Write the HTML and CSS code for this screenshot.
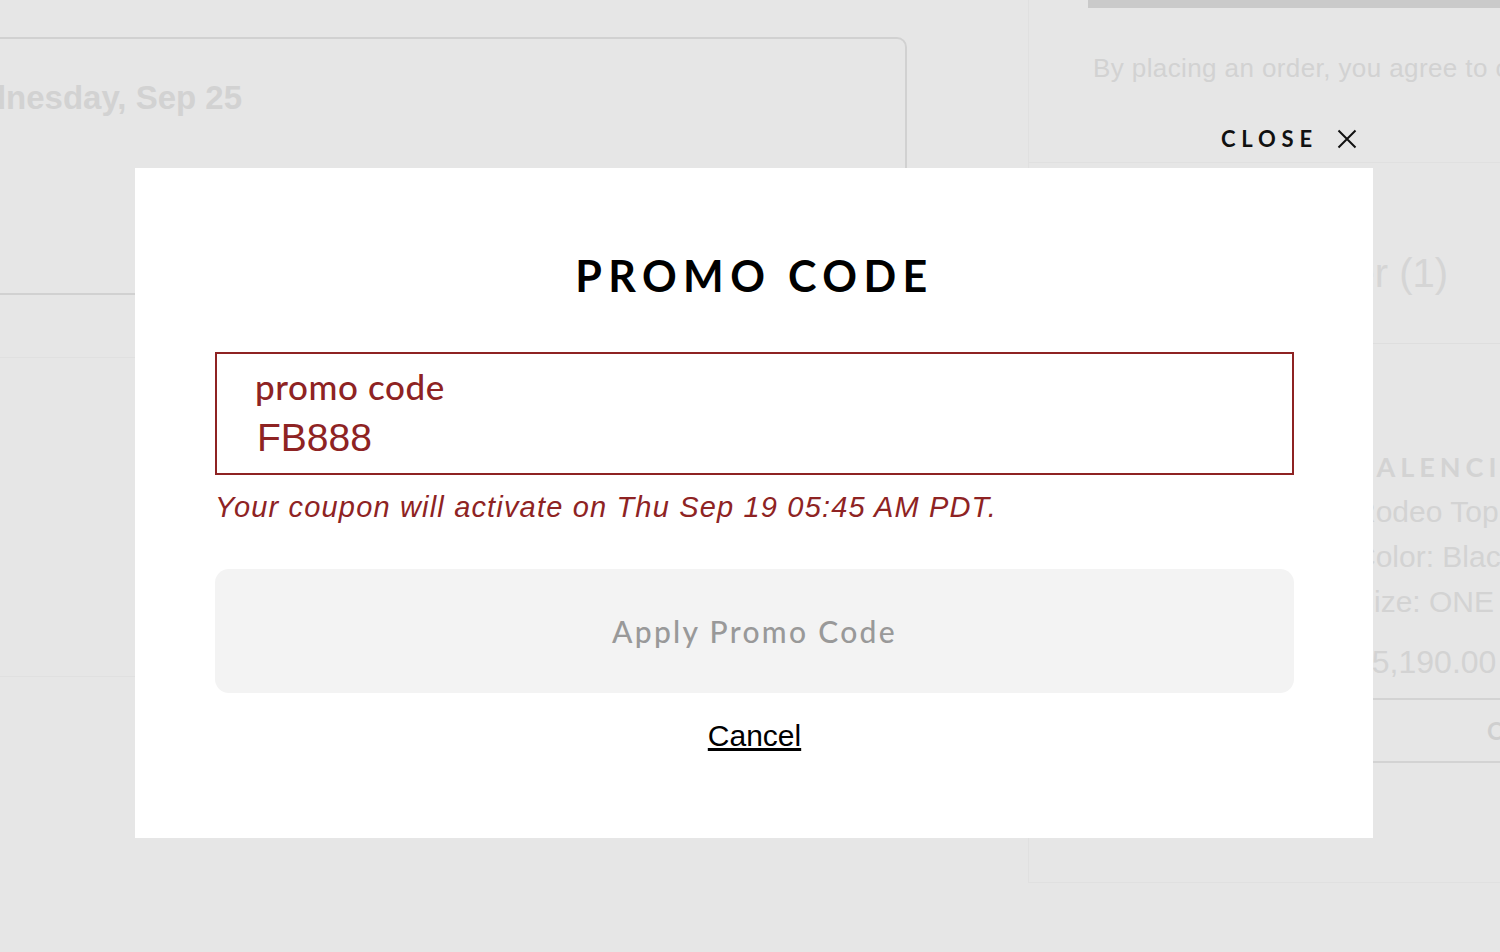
FILE: index.html
```html
<!DOCTYPE html>
<html lang="en">
<head>
    <meta charset="UTF-8">
    <meta name="viewport" content="width=device-width, initial-scale=1.0">
    <title>Checkout - Promo Code</title>
    <link rel="stylesheet" href="styles.css">
</head>
<body>
    <div class="page">
        <div class="main">
            <div class="card">
                <h2 class="delivery-date">Wednesday, Sep 25</h2>
            </div>
            <div class="card-faint"></div>
        </div>

        <div class="side">
            <div class="side-box">
                <div class="place-order"></div>
                <p class="terms">By placing an order, you agree to our Terms</p>
            </div>
            <div class="side-box summary">
                <h3 class="summary-title">Your Order (1)</h3>
                <div class="item">
                    <div class="item-thumb"></div>
                    <div class="item-info">
                        <div class="item-brand">BALENCIAGA</div>
                        <div class="item-line">Rodeo Top</div>
                        <div class="item-line">Color: Black</div>
                        <div class="item-line">Size: ONE SIZE</div>
                        <div class="item-price">$5,190.00</div>
                    </div>
                </div>
                <div class="side-btn">CHANGE</div>
            </div>
        </div>
    </div>

    <button class="close-btn">
        <span>CLOSE</span>
        <svg width="20" height="20" viewBox="0 0 20 20">
            <path d="M1.5 1.5 L18.5 18.5 M18.5 1.5 L1.5 18.5" stroke="#111" stroke-width="2" fill="none"/>
        </svg>
    </button>

    <div class="modal">
        <h1 class="modal-title">PROMO CODE</h1>
        <div class="field">
            <label for="promo">promo code</label>
            <input type="text" id="promo" value="FB888">
        </div>
        <p class="field-error">Your coupon will activate on Thu Sep 19 05:45 AM PDT.</p>
        <button class="apply-btn">Apply Promo Code</button>
        <div class="cancel-row">
            <a href="#" class="cancel-link">Cancel</a>
        </div>
    </div>
</body>
</html>
```

FILE: styles.css
```css
body {
    margin: 0;
    width: 1500px;
    height: 952px;
    overflow: hidden;
    background-color: #e6e6e6;
    font-family: 'Liberation Sans', Arial, sans-serif;
    position: relative;
}

.page {
    display: flex;
}

/* background page, greyed out behind the modal */
.main {
    width: 1028px;
    flex: none;
}

.card {
    box-sizing: border-box;
    width: 1027px;
    height: 258px;
    margin: 37px 0 0 -120px;
    padding: 39px 0 0 55px;
    border: 2px solid #d1d1d1;
    border-radius: 10px;
}

.delivery-date {
    margin: 0;
    font-size: 33px;
    line-height: 40px;
    font-weight: bold;
    color: #d2d2d2;
    white-space: nowrap;
}

.card-faint {
    height: 318px;
    margin-top: 62px;
    border-top: 1px solid #e0e0e0;
    border-bottom: 1px solid #e0e0e0;
}

.side {
    width: 600px;
    flex: none;
}

.side-box {
    box-sizing: border-box;
    border-left: 1px solid #e0e0e0;
    border-bottom: 1px solid #e0e0e0;
    height: 163px;
    padding-left: 59px;
}

.place-order {
    width: 460px;
    height: 8px;
    background-color: #cacaca;
}

.terms {
    margin: 45px 0 0 5px;
    font-size: 26px;
    line-height: 30px;
    letter-spacing: 0.4px;
    color: #d2d2d2;
    white-space: nowrap;
}

.summary {
    height: 720px;
    padding-left: 0;
}

.summary-title {
    margin: 0;
    padding: 86px 0 46px 165px;
    font-size: 40px;
    line-height: 48px;
    font-weight: normal;
    color: #d5d5d5;
    border-bottom: 1px solid #dedede;
    white-space: nowrap;
}

.item {
    display: flex;
    gap: 35px;
    padding: 0 0 0 60px;
}

.item-thumb {
    width: 230px;
    height: 300px;
    margin-top: 40px;
    background-color: #dcdcdc;
}

.item-info {
    padding-top: 106px;
    color: #d3d3d3;
    white-space: nowrap;
}

.item-brand {
    font-family: Lato, sans-serif;
    font-weight: 700;
    font-size: 27px;
    line-height: 34px;
    letter-spacing: 5px;
    margin-bottom: 5px;
}

.item-line {
    font-size: 30px;
    line-height: 45px;
}

.item-price {
    font-size: 32px;
    line-height: 44px;
    margin: 16px 0 14px;
}

.side-btn {
    box-sizing: border-box;
    height: 65px;
    margin-left: 80px;
    padding-left: 378px;
    border-top: 2px solid #d3d3d3;
    border-bottom: 2px solid #d3d3d3;
    font-family: Lato, sans-serif;
    font-weight: 700;
    font-size: 24px;
    line-height: 61px;
    letter-spacing: 3px;
    color: #cfcfcf;
}

/* overlay */
.close-btn {
    position: absolute;
    left: 1221px;
    top: 127px;
    display: flex;
    align-items: center;
    gap: 19px;
    padding: 0;
    border: none;
    background: none;
    cursor: pointer;
    font-family: Lato, sans-serif;
    font-weight: 700;
    font-size: 22px;
    line-height: 24px;
    letter-spacing: 5.8px;
    color: #111;
}

.close-btn svg {
    display: block;
}

.modal {
    position: absolute;
    left: 135px;
    top: 168px;
    box-sizing: border-box;
    width: 1238px;
    height: 670px;
    padding: 83px 79px 0 80px;
    background-color: white;
}

.modal-title {
    margin: 0;
    text-align: center;
    font-family: Lato, sans-serif;
    font-weight: 700;
    font-size: 43px;
    line-height: 50px;
    letter-spacing: 6.4px;
    color: #000;
}

.field {
    margin-top: 51px;
    border: 2px solid #8e2323;
    padding: 12px 38px 12px;
}

.field label {
    display: block;
    font-family: Lato, sans-serif;
    font-weight: 500;
    font-size: 35px;
    line-height: 40px;
    letter-spacing: 0.6px;
    color: #8e2323;
}

.field input {
    display: block;
    width: 100%;
    margin-top: 9px;
    padding: 0 0 0 2px;
    border: none;
    outline: none;
    font-family: 'Liberation Sans', Arial, sans-serif;
    font-size: 39px;
    line-height: 46px;
    height: 46px;
    color: #8e2323;
}

.field-error {
    margin: 14px 0 0 0;
    font-style: italic;
    font-size: 29px;
    line-height: 36px;
    letter-spacing: 1.17px;
    color: #8e2323;
}

.apply-btn {
    display: block;
    width: 100%;
    height: 124px;
    margin-top: 44px;
    border: none;
    border-radius: 14px;
    background-color: #f3f3f3;
    font-family: Lato, sans-serif;
    font-weight: 500;
    font-size: 30px;
    letter-spacing: 2.3px;
    color: #999;
}

.cancel-row {
    text-align: center;
    margin-top: 23px;
}

.cancel-link {
    font-size: 30px;
    line-height: 40px;
    color: #000;
}
```
